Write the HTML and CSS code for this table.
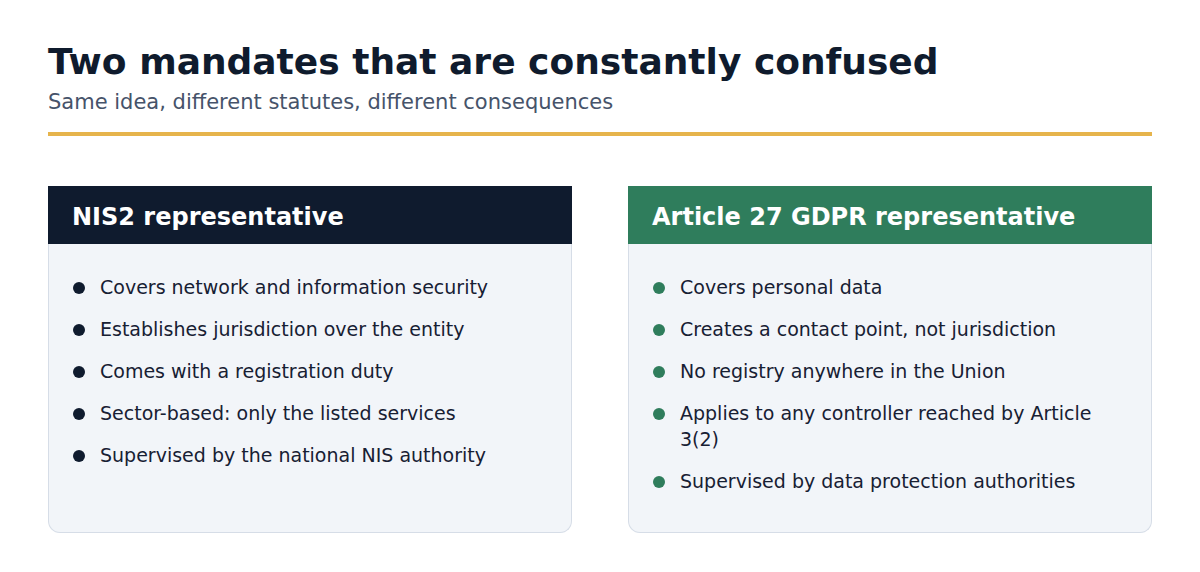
FILE: index.html
```html
<!DOCTYPE html>
<html lang="en">
<head>
<meta charset="utf-8">
<title>Two mandates</title>
<link rel="stylesheet" href="styles.css">
</head>
<body>
<main class="page">
  <header class="intro">
    <h1 class="title">Two mandates that are constantly confused</h1>
    <p class="subtitle">Same idea, different statutes, different consequences</p>
  </header>
  <div class="rule"></div>
  <section class="cards">
    <article class="card card-nis">
      <h2 class="card-head">NIS2 representative</h2>
      <ul class="card-list">
        <li>Covers network and information security</li>
        <li>Establishes jurisdiction over the entity</li>
        <li>Comes with a registration duty</li>
        <li>Sector-based: only the listed services</li>
        <li>Supervised by the national NIS authority</li>
      </ul>
    </article>
    <article class="card card-gdpr">
      <h2 class="card-head">Article 27 GDPR representative</h2>
      <ul class="card-list">
        <li>Covers personal data</li>
        <li>Creates a contact point, not jurisdiction</li>
        <li>No registry anywhere in the Union</li>
        <li>Applies to any controller reached by Article 3(2)</li>
        <li>Supervised by data protection authorities</li>
      </ul>
    </article>
  </section>
</main>
</body>
</html>
```

FILE: styles.css
```css
* { box-sizing: border-box; }
html, body { margin: 0; padding: 0; background: #ffffff; }
body {
  font-family: "DejaVu Sans", Verdana, sans-serif;
  color: #172033;
}
.page {
  padding: 41px 48px 0 48px;
}
.title {
  margin: 0;
  font-size: 36px;
  line-height: 42px;
  font-weight: 700;
  color: #0f1b2d;
}
.subtitle {
  margin: 7px 0 0 0;
  font-size: 21px;
  line-height: 25px;
  color: #46536a;
}
.rule {
  margin-top: 17px;
  height: 4px;
  background: #e6b44c;
}
.cards {
  margin-top: 50px;
  display: grid;
  grid-template-columns: 1fr 1fr;
  gap: 56px;
}
.card {
  display: flex;
  flex-direction: column;
}
.card-head {
  margin: 0;
  height: 58px;
  padding: 3px 24px 0 24px;
  display: flex;
  align-items: center;
  font-size: 24px;
  font-weight: 700;
  color: #ffffff;
  background: #0f1b2e;
}
.card-gdpr .card-head { background: #2f7d5c; }
.card-list {
  flex: 1;
  list-style: none;
  margin: 0;
  padding: 30px 24px 38px 24px;
  background: #f2f5f9;
  border: 1px solid #d6dde7;
  border-top: none;
  border-radius: 0 0 12px 12px;
  display: flex;
  flex-direction: column;
  gap: 16px;
}
.card-list li {
  display: flex;
  align-items: flex-start;
  font-size: 19px;
  line-height: 26px;
  color: #172033;
}
.card-list li::before {
  content: "";
  flex: none;
  width: 12px;
  height: 12px;
  border-radius: 50%;
  margin: 8px 15px 0 0;
  background: #0f1b2e;
}
.card-gdpr .card-list li::before { background: #2f7d5c; }
```
